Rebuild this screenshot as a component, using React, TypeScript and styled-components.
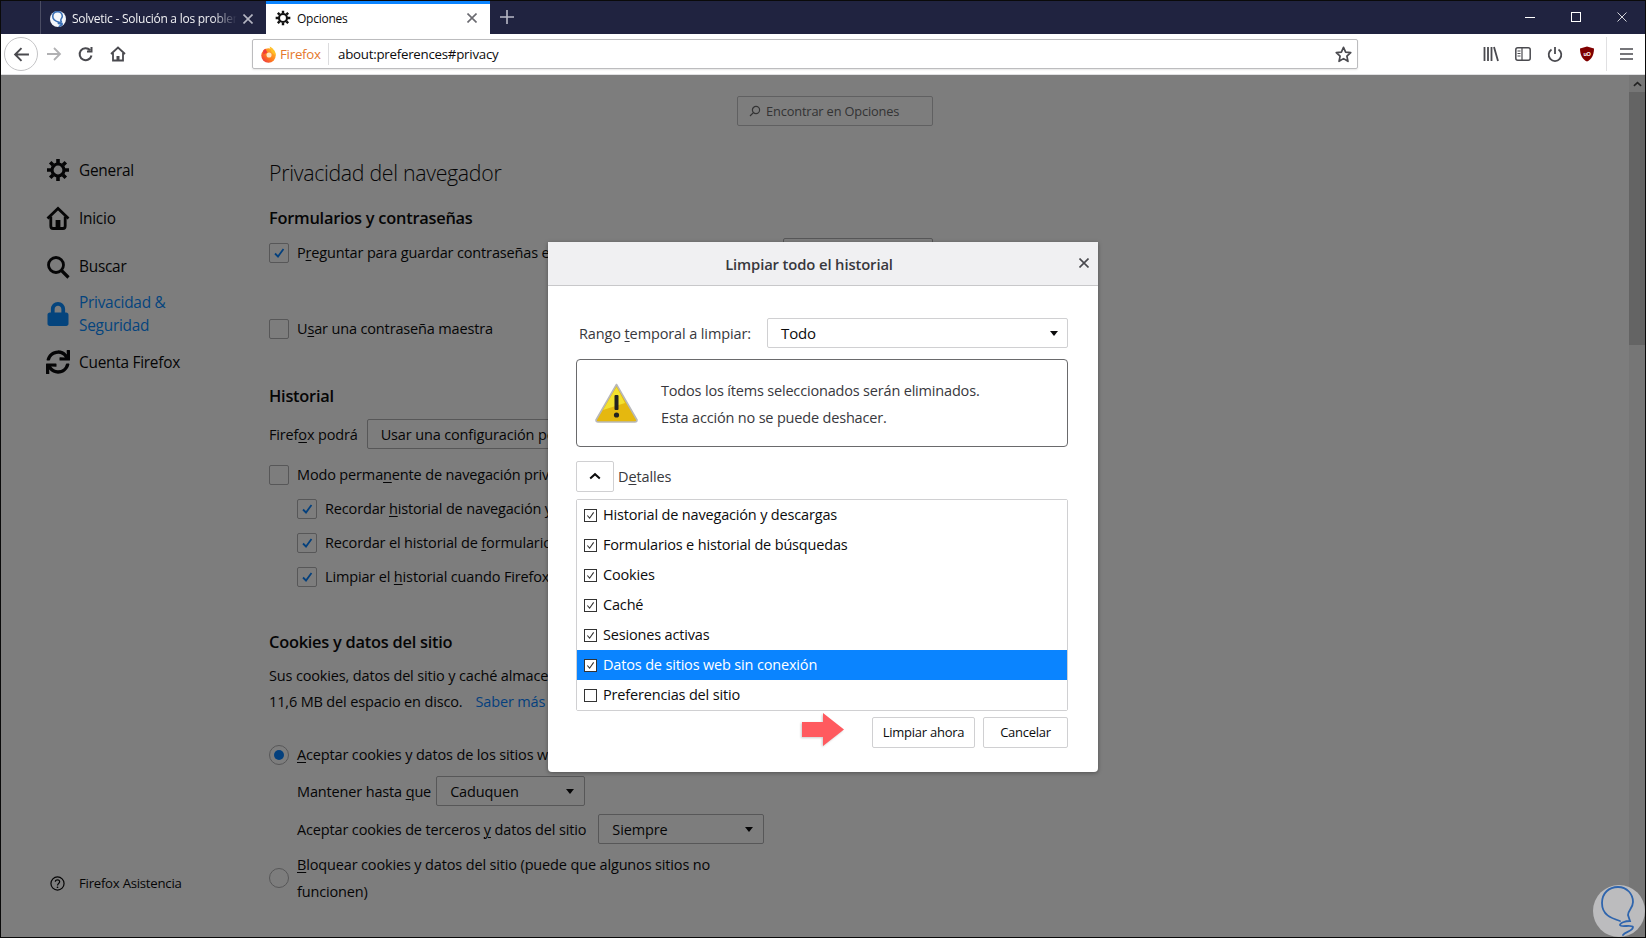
import React from "react";
import styled, { createGlobalStyle } from "styled-components";
import { FaLock, FaSync } from "react-icons/fa";

const Global = createGlobalStyle`
  html, body { margin: 0; padding: 0; width: 1646px; height: 938px; overflow: hidden; background: #000; }
  * { box-sizing: border-box; }
  u { text-underline-offset: 2px; text-decoration-thickness: 1px; }
`;

const FONT = `"Open Sans", "Noto Sans", "Liberation Sans", sans-serif`;

const Win = styled.div`
  position: relative; width: 1646px; height: 938px; border: 1px solid #0a0a0a; display: flex; flex-direction: column;
  overflow: hidden; font-family: ${FONT}; color: #0c0c0d; background: #fff; letter-spacing: -0.25px;
`;
const TabBar = styled.div`height: 33px; background: #202340; display: flex; flex: none;`;
const TabSpacer = styled.div`width: 39px; flex: none;`;
const Tab = styled.div<{ $active?: boolean; $w: number }>`
  width: ${p => p.$w}px; flex: none; height: 33px; display: flex; align-items: center; font-size: 12px;
  padding-top: ${p => (p.$active ? 0 : 2)}px; padding-bottom: ${p => (p.$active ? 2 : 0)}px; overflow: hidden;
  background: ${p => (p.$active ? "#fff" : "transparent")};
  color: ${p => (p.$active ? "#0c0c0d" : "#f1f1f4")};
  border-top: ${p => (p.$active ? "3px solid #0a84ff" : "0")};
  border-left: ${p => (p.$active ? "0" : "1px solid #4a4c63")};
`;
const TabIcon = styled.span`width: 16px; height: 16px; flex: none; display: flex; margin-left: 9px; margin-right: 6px;`;
const TabTitle = styled.span<{ $fade?: boolean }>`
  flex: 1; white-space: nowrap; overflow: hidden;
  ${p => p.$fade && `-webkit-mask-image: linear-gradient(to right, #000 85%, transparent 100%);`}
`;
const TabClose = styled.svg`width: 10px; height: 10px; flex: none; margin: 0 13px 0 6px;`;
const NewTab = styled.svg`width: 14px; height: 14px; margin: 9px 0 0 10px; flex: none;`;
const WinControls = styled.div`margin-left: auto; display: flex; height: 33px; align-items: center; padding-right: 18px; gap: 36px;`;
const WinGlyph = styled.svg`width: 10px; height: 10px; display: block; margin-top: -1px;`;

const NavBar = styled.div`
  height: 41px; flex: none; background: #fff; border-bottom: 1px solid #e0e0e2; display: flex; align-items: center;
`;
const BackCircle = styled.div`
  width: 34px; height: 34px; border-radius: 50%; border: 1px solid #c4c4c6; margin-left: 3px; display: flex; align-items: center; justify-content: center; flex: none;
`;
const NavBtn = styled.svg<{ $ml: number }>`width: 16px; height: 16px; margin-left: ${p => p.$ml}px; flex: none;`;
const UrlBar = styled.div`
  width: 1106px; height: 30px; margin-left: 126px; flex: none; border: 1px solid #bcbcbe; border-radius: 2px; display: flex; align-items: center;
  box-shadow: 0 1px 2px rgba(0,0,0,.1); font-size: 13.3px;
`;
const FoxIcon = styled.svg`width: 17px; height: 17px; margin-left: 7px; flex: none;`;
const FoxLabel = styled.span`color: #e5782b; margin-left: 3px; width: 48px; flex: none;`;
const UrlSep = styled.span`width: 1px; height: 22px; background: #dcdcde; flex: none;`;
const UrlText = styled.span`margin-left: 9px; flex: 1; color: #0c0c0d;`;
const Star = styled.svg`width: 17px; height: 17px; margin-right: 5px; flex: none;`;
const NavRight = styled.div`margin-left: auto; display: flex; align-items: center; height: 100%; padding-right: 12px;`;
const ToolIcon = styled.svg<{ $ml?: number; $w?: number }>`width: ${p => p.$w ?? 16}px; height: 16px; margin-left: ${p => p.$ml ?? 16}px; flex: none;`;
const ToolSep = styled.span`width: 1px; height: 34px; background: #e0e0e2; margin: 0 13px 0 11px; flex: none;`;

const Content = styled.div`flex: 1; display: flex; position: relative; overflow: hidden; background: #fff; min-height: 0;`;
const Sidebar = styled.nav`
  width: 268px; flex: none; display: flex; flex-direction: column; justify-content: space-between; padding: 71px 0 45px 45px; font-size: 15.4px;
`;
const SideList = styled.div`display: flex; flex-direction: column;`;
const SideItem = styled.div<{ $active?: boolean; $h?: number }>`
  display: flex; align-items: center; gap: 9px; height: ${p => p.$h ?? 48}px; line-height: 23px;
  color: ${p => (p.$active ? "#0a8cff" : "#0c0c0d")};
  svg { width: 24px; height: 24px; flex: none; color: ${p => (p.$active ? "#0a8cff" : "#0c0c0d")}; }
`;
const Support = styled.div`display: flex; align-items: center; gap: 14px; font-size: 13.2px; padding-left: 4px; height: 18px;`;
const Main = styled.main`flex: 1; display: flex; flex-direction: column; padding-top: 21px; font-size: 14.5px; letter-spacing: -0.15px; min-width: 0;`;
const SearchWrap = styled.div`padding-left: 468px; flex: none;`;
const SearchBox = styled.div`
  width: 196px; height: 30px; border: 1px solid #c4c4c6; border-radius: 2px; display: flex; align-items: center; gap: 5px; padding-left: 11px; font-size: 12.8px; color: #6a6a6c;
  svg { width: 12px; height: 12px; }
`;
const Title = styled.h1`font-size: 21.3px; font-weight: 300; line-height: 30px; margin: 32px 0 0; letter-spacing: -0.3px; flex: none;`;
const Heading = styled.h2<{ $mt: number }>`font-size: 16.4px; font-weight: 600; line-height: 22px; margin: ${p => p.$mt}px 0 0; letter-spacing: -0.25px; flex: none;`;
const Row = styled.div<{ $mt: number; $indent?: boolean }>`
  display: flex; align-items: center; gap: 8px; height: 20px; margin-top: ${p => p.$mt}px; padding-left: ${p => (p.$indent ? 28 : 0)}px; flex: none; white-space: nowrap;
`;
const RowText = styled.span<{ $w?: number }>`
  line-height: 19px; padding-bottom: 1px; ${p => p.$w && `width: ${p.$w}px; overflow: hidden; flex: none;`}
`;
const Box = styled.span`
  width: 20px; height: 20px; border: 1px solid #b1b1b3; border-radius: 2px; flex: none; background: #fff; display: flex; align-items: center; justify-content: center;
  svg { width: 12px; height: 12px; }
`;
const PageButton = styled.span`
  width: 150px; height: 30px; margin: -5px 0; border: 1px solid #b1b1b3; border-radius: 2px; background: #fff; flex: none; display: flex; align-items: center; justify-content: center;
`;
const Radio = styled.span<{ $on?: boolean }>`
  width: 20px; height: 20px; border-radius: 50%; border: 1px solid #b1b1b3; flex: none; background: #fff; display: flex; align-items: center; justify-content: center;
  &::after { content: ""; width: 10px; height: 10px; border-radius: 50%; background: ${p => (p.$on ? "#0a84ff" : "transparent")}; }
`;
const FieldRow = styled.div<{ $mt: number; $indent?: boolean; $gap?: number }>`
  display: flex; align-items: center; gap: ${p => p.$gap ?? 8}px; height: 30px; margin-top: ${p => p.$mt}px; padding-left: ${p => (p.$indent ? 28 : 0)}px; flex: none; white-space: nowrap;
`;
const PageSelect = styled.div<{ $w: number }>`
  width: ${p => p.$w}px; height: 30px; border: 1px solid #b1b1b3; border-radius: 2px; display: flex; align-items: center; justify-content: space-between; padding: 0 10px 0 13px; background: #fff; flex: none; white-space: nowrap;
`;
const Caret = styled.span`width: 0; height: 0; border-left: 4px solid transparent; border-right: 4px solid transparent; border-top: 5px solid #0c0c0d; flex: none;`;
const Para = styled.p`margin: 10px 0 0; line-height: 26px; flex: none; white-space: nowrap;`;
const LinkText = styled.span`color: #0a84ff; margin-left: 13px;`;
const TwoLine = styled.div`display: flex; align-items: center; gap: 8px; margin-top: 7px; line-height: 27px; flex: none; max-width: 470px;`;
const Scroll = styled.div`width: 16px; flex: none; background: #f0f0f0; display: flex; flex-direction: column;`;
const ScrollUp = styled.div`height: 17px; display: flex; align-items: center; justify-content: center; flex: none;`;
const ScrollThumb = styled.div`height: 253px; background: #cdcdcd; flex: none;`;

const Scrim = styled.div`position: absolute; inset: 0; background: rgba(0, 0, 0, 0.51);`;
const Dialog = styled.div`
  position: absolute; left: 547px; top: 167px; width: 550px; height: 530px; background: #fff; border-radius: 0 0 4px 4px; box-shadow: 0 1px 4px rgba(0,0,0,.35);
  display: flex; flex-direction: column; font-size: 14.5px; letter-spacing: -0.12px; color: #0c0c0d;
`;
const DlgHeader = styled.div`
  height: 44px; flex: none; background: #f0f0f2; border-bottom: 1px solid #c8c8ca; display: flex; align-items: center; justify-content: center; padding-right: 28px; font-weight: 600; font-size: 14.8px; color: #38383d; position: relative; padding-top: 1px;
`;
const DlgClose = styled.svg`position: absolute; right: 9px; top: 16px; width: 10px; height: 10px;`;
const DlgBody = styled.div`padding: 0 30px 0 28px; display: flex; flex-direction: column; flex: 1;`;
const RangeRow = styled.div`display: flex; align-items: center; justify-content: space-between; margin-top: 32px; height: 30px; padding-left: 3px; flex: none; color: #38383d;`;
const DlgSelect = styled.div`
  width: 301px; height: 30px; border: 1px solid #d0d0d2; border-radius: 2px; display: flex; align-items: center; justify-content: space-between; padding: 0 9px 0 13px; color: #0c0c0d; font-size: 15px;
`;
const Warning = styled.div`
  margin-top: 11px; height: 88px; border: 1px solid #6a6a6c; border-radius: 4px; display: flex; align-items: center; padding-left: 18px; gap: 23px; line-height: 27px; color: #38383d; flex: none; letter-spacing: -0.18px;
`;
const WarnText = styled.div`padding-top: 2px;`;
const WarnIcon = styled.svg`width: 43px; height: 40px; flex: none;`;
const DetailsRow = styled.div`margin-top: 14px; height: 30px; display: flex; align-items: center; gap: 4px; color: #38383d; flex: none;`;
const ChevronBtn = styled.div`width: 38px; height: 31px; border: 1px solid #d0d0d2; border-radius: 2px; display: flex; align-items: center; justify-content: center;`;
const List = styled.div`margin-top: 8px; height: 212px; border: 1px solid #d0d0d2; border-radius: 2px; flex: none; display: flex; flex-direction: column;`;
const ListRow = styled.div<{ $sel?: boolean }>`
  height: 30px; flex: none; display: flex; align-items: center; gap: 6px; padding-left: 7px; letter-spacing: -0.17px;
  background: ${p => (p.$sel ? "#0a84ff" : "#fff")}; color: ${p => (p.$sel ? "#fff" : "#0c0c0d")};
`;
const ListLabel = styled.span`padding-bottom: 2px;`;
const MiniBox = styled.span`
  width: 13px; height: 13px; flex: none; border: 1px solid #333; background: #fff; display: flex; align-items: center; justify-content: center;
  svg { width: 9px; height: 9px; }
`;
const Footer = styled.div`display: flex; align-items: flex-start; justify-content: flex-end; gap: 8px; margin-top: 2px; flex: none;`;
const Arrow = styled.svg`width: 46px; height: 34px; flex: none; margin-right: 17px; filter: drop-shadow(-1px 1px 1px rgba(0,0,0,.2));`;
const DlgButton = styled.div<{ $w: number }>`
  width: ${p => p.$w}px; height: 31px; margin-top: 4px; padding-bottom: 2px; border: 1px solid #d0d0d2; border-radius: 2px; display: flex; align-items: center; justify-content: center; font-size: 13px; background: #fff; color: #0c0c0d; letter-spacing: -0.25px;
`;
const Watermark = styled.svg`position: absolute; right: 0; bottom: 0; width: 52px; height: 52px;`;

const X = ({ c = "#6a6a70", w = 1.6 }: { c?: string; w?: number }) => (
  <path d="M0.5 0.5 L9.5 9.5 M9.5 0.5 L0.5 9.5" stroke={c} strokeWidth={w} fill="none" />
);
const Check = ({ c = "#0a84ff" }: { c?: string }) => (
  <svg viewBox="0 0 12 12"><path d="M2 6.5 L5 9.5 L10.5 2" stroke={c} strokeWidth="1.8" fill="none" /></svg>
);
const MiniCheck = () => (
  <svg viewBox="0 0 10 10"><path d="M1.5 5 L4 8 L8.5 1.5" stroke="#333" strokeWidth="1.2" fill="none" /></svg>
);
const Bulb = ({ c, w }: { c: string; w: number }) => (
  <path d="M27 36 C18 33 9 30 9 18 C9 8 16 2 25 2 C34 2 40 9 40 17 C40 23 35 25 35 30 L37 36 C32 36 27 38 27 40 C28 43 38 39 40 42 C40 46 32 47 30 50" stroke={c} strokeWidth={w} fill="none" strokeLinecap="round" />
);
const Gear = ({ size = 24, c = "#0c0c0d" }: { size?: number; c?: string }) => (
  <svg viewBox="0 0 24 24" width={size} height={size}>
    <circle cx="12" cy="12" r="6" stroke={c} strokeWidth="3.2" fill="none" />
    <path d="M12 1 V5 M12 19 V23 M1 12 H5 M19 12 H23 M4.2 4.2 L7 7 M17 17 L19.8 19.8 M4.2 19.8 L7 17 M17 7 L19.8 4.2" stroke={c} strokeWidth="3.6" />
  </svg>
);
const HomeIcon = () => (
  <svg viewBox="0 0 24 24">
    <path d="M1.5 12.5 L12 2.5 L22.5 12.5" stroke="currentColor" strokeWidth="2.8" fill="none" />
    <path d="M4.8 10.5 V20 Q4.8 22.5 7 22.5 H17 Q19.2 22.5 19.2 20 V10.5" stroke="currentColor" strokeWidth="2.8" fill="none" />
    <rect x="9.6" y="14" width="4.8" height="8" fill="currentColor" />
  </svg>
);
const SearchIcon = () => (
  <svg viewBox="0 0 24 24">
    <circle cx="10" cy="10" r="7.5" stroke="currentColor" strokeWidth="2.8" fill="none" />
    <path d="M15.5 15.5 L22.5 22.5" stroke="currentColor" strokeWidth="3.2" />
  </svg>
);

const rows: [string, boolean, boolean][] = [
  ["Historial de navegación y descargas", true, false],
  ["Formularios e historial de búsquedas", true, false],
  ["Cookies", true, false],
  ["Caché", true, false],
  ["Sesiones activas", true, false],
  ["Datos de sitios web sin conexión", true, true],
  ["Preferencias del sitio", false, false],
];

export default function App() {
  return (
    <Win>
      <Global />
      <TabBar>
        <TabSpacer />
        <Tab $w={226}>
          <TabIcon>
            <svg viewBox="0 0 52 52" width="16" height="16">
              <circle cx="26" cy="26" r="26" fill="#f4f6fa" />
              <Bulb c="#3a6fb5" w={5} />
            </svg>
          </TabIcon>
          <TabTitle $fade>Solvetic - Solución a los problemas</TabTitle>
          <TabClose viewBox="0 0 10 10"><X c="#b4b5c2" /></TabClose>
        </Tab>
        <Tab $w={224} $active>
          <TabIcon><Gear size={16} c="#111" /></TabIcon>
          <TabTitle>Opciones</TabTitle>
          <TabClose viewBox="0 0 10 10"><X /></TabClose>
        </Tab>
        <NewTab viewBox="0 0 14 14"><path d="M7 0 V14 M0 7 H14" stroke="#b8b9c6" strokeWidth="1.6" /></NewTab>
        <WinControls>
          <WinGlyph viewBox="0 0 10 10"><path d="M0 5.5 H10" stroke="#fff" /></WinGlyph>
          <WinGlyph viewBox="0 0 10 10"><rect x="0.5" y="0.5" width="9" height="9" stroke="#fff" fill="none" /></WinGlyph>
          <WinGlyph viewBox="0 0 10 10"><X c="#fff" w={0.8} /></WinGlyph>
        </WinControls>
      </TabBar>
      <NavBar>
        <BackCircle>
          <svg viewBox="0 0 16 16" width="17" height="17"><path d="M15 8 H2 M8 2 L2 8 L8 14" stroke="#4a4a4f" strokeWidth="1.8" fill="none" /></svg>
        </BackCircle>
        <NavBtn $ml={8} viewBox="0 0 16 16"><path d="M1 8 H14 M8 2 L14 8 L8 14" stroke="#b1b1b3" strokeWidth="1.8" fill="none" /></NavBtn>
        <NavBtn $ml={16} viewBox="0 0 16 16"><path d="M13.5 9.5 A6 6 0 1 1 12 4 M13.5 1 V5.5 H9" stroke="#4a4a4f" strokeWidth="2" fill="none" /></NavBtn>
        <NavBtn $ml={16} viewBox="0 0 16 16"><path d="M1 8 L8 1.5 L15 8 M3 7 V14.5 H13 V7" stroke="#4a4a4f" strokeWidth="1.8" fill="none" /><rect x="6.5" y="10" width="3" height="4.5" fill="#4a4a4f" /></NavBtn>
        <UrlBar>
          <FoxIcon viewBox="0 0 16 16">
            <defs>
              <linearGradient id="fx" x1="1" y1="0" x2="0" y2="1"><stop offset="0" stopColor="#ffcb2e" /><stop offset="0.55" stopColor="#ff7a1e" /><stop offset="1" stopColor="#e8264b" /></linearGradient>
            </defs>
            <circle cx="8" cy="9" r="6.8" fill="url(#fx)" />
            <circle cx="8.5" cy="8.5" r="2.4" fill="#fde7c8" />
            <path d="M9 0.5 C13 2.5 15 6 14.8 9 L11 6 Z" fill="#ffc128" />
            <path d="M3 5 C3 3.5 4 3 5 2.5 L7 6 L3 8 Z" fill="#ef3c3c" />
          </FoxIcon>
          <FoxLabel>Firefox</FoxLabel>
          <UrlSep />
          <UrlText>about:preferences#privacy</UrlText>
          <Star viewBox="0 0 16 16"><path d="M8 1.3 L10 5.8 L14.8 6.3 L11.2 9.6 L12.2 14.4 L8 11.9 L3.8 14.4 L4.8 9.6 L1.2 6.3 L6 5.8 Z" fill="none" stroke="#4a4a4f" strokeWidth="1.6" strokeLinejoin="round" /></Star>
        </UrlBar>
        <NavRight>
          <ToolIcon viewBox="0 0 16 16"><path d="M1.5 1 V15 M5 1 V15 M8.5 1 V15 M11 1 L15 15" stroke="#4a4a4f" strokeWidth="1.8" fill="none" /></ToolIcon>
          <ToolIcon viewBox="0 0 16 16"><rect x="0.8" y="1.8" width="14.4" height="12.4" rx="2" fill="none" stroke="#4a4a4f" strokeWidth="1.5" /><path d="M7 2 V14 M2.5 5 H5.5 M2.5 7.5 H5.5 M2.5 10 H5.5" stroke="#4a4a4f" strokeWidth="1.2" /></ToolIcon>
          <ToolIcon viewBox="0 0 16 16"><path d="M8 1 V8 M4.5 3.5 A6.3 6.3 0 1 0 11.5 3.5" stroke="#4a4a4f" strokeWidth="1.8" fill="none" /></ToolIcon>
          <ToolIcon viewBox="0 0 16 16">
            <path d="M8 0.5 L15 2.5 C15 9 12.5 13.5 8 15.5 C3.5 13.5 1 9 1 2.5 Z" fill="#800000" />
            <text x="8" y="9.6" fontSize="5.5" fontWeight="700" textAnchor="middle" fill="#fff" fontFamily="Liberation Sans, sans-serif">uO</text>
          </ToolIcon>
          <ToolSep />
          <ToolIcon $ml={0} $w={13} viewBox="0 0 13 16"><path d="M0 3 H13 M0 8 H13 M0 13 H13" stroke="#4a4a4f" strokeWidth="1.7" /></ToolIcon>
        </NavRight>
      </NavBar>
      <Content>
        <Sidebar>
          <SideList>
            <SideItem><Gear />General</SideItem>
            <SideItem><HomeIcon />Inicio</SideItem>
            <SideItem $h={49}><SearchIcon />Buscar</SideItem>
            <SideItem $active $h={46}><FaLock />Privacidad &amp;<br />Seguridad</SideItem>
            <SideItem $h={50}><FaSync />Cuenta Firefox</SideItem>
          </SideList>
          <Support>
            <svg viewBox="0 0 16 16" width="15" height="15"><circle cx="8" cy="8" r="7" stroke="#0c0c0d" strokeWidth="1.3" fill="none" /><path d="M5.7 6.2 C5.7 3.4 10.3 3.4 10.3 6.2 C10.3 8 8 8 8 10" stroke="#0c0c0d" strokeWidth="1.3" fill="none" /><circle cx="8" cy="12" r="0.9" fill="#0c0c0d" /></svg>
            Firefox Asistencia
          </Support>
        </Sidebar>
        <Main>
          <SearchWrap>
            <SearchBox>
              <svg viewBox="0 0 12 12"><circle cx="7" cy="5" r="3.6" stroke="#6a6a6c" strokeWidth="1.2" fill="none" /><path d="M4.4 7.6 L1 11" stroke="#6a6a6c" strokeWidth="1.2" /></svg>
              Encontrar en Opciones
            </SearchBox>
          </SearchWrap>
          <Title>Privacidad del navegador</Title>
          <Heading $mt={19}>Formularios y contraseñas</Heading>
          <Row $mt={14}>
            <Box><Check /></Box>
            <RowText $w={478}>P<u>r</u>eguntar para guardar contraseñas e inicios de sesión de sitios web</RowText>
            <PageButton>Excepciones…</PageButton>
          </Row>
          <Row $mt={56}><Box /><RowText>U<u>s</u>ar una contraseña maestra</RowText></Row>
          <Heading $mt={46}>Historial</Heading>
          <FieldRow $mt={12} $gap={9}><span>Firef<u>o</u>x podrá</span><PageSelect $w={400}>Usar una configuración personalizada para el historial</PageSelect></FieldRow>
          <Row $mt={16}><Box /><RowText>Modo perma<u>n</u>ente de navegación privada</RowText></Row>
          <Row $mt={14} $indent><Box><Check /></Box><RowText>Recordar <u>h</u>istorial de navegación y descargas</RowText></Row>
          <Row $mt={14} $indent><Box><Check /></Box><RowText>Recordar el historial de <u>f</u>ormularios y búsquedas</RowText></Row>
          <Row $mt={14} $indent><Box><Check /></Box><RowText>Limpiar el <u>h</u>istorial cuando Firefox se cierre</RowText></Row>
          <Heading $mt={44}>Cookies y datos del sitio</Heading>
          <Para>Sus cookies, datos del sitio y caché almacenados están usando actualmente<br />11,6 MB del espacio en disco.<LinkText>Saber más</LinkText></Para>
          <Row $mt={30}><Radio $on /><RowText><u>A</u>ceptar cookies y datos de los sitios web</RowText></Row>
          <FieldRow $mt={11} $indent $gap={5}><span>Mantener hasta <u>q</u>ue</span><PageSelect $w={149}>Caduquen<Caret /></PageSelect></FieldRow>
          <FieldRow $mt={8} $indent $gap={12}><span>Aceptar cookies de terceros <u>y</u> datos del sitio</span><PageSelect $w={166}>Siempre<Caret /></PageSelect></FieldRow>
          <TwoLine><Radio /><span><u>B</u>loquear cookies y datos del sitio (puede que algunos sitios no funcionen)</span></TwoLine>
        </Main>
        <Scroll>
          <ScrollUp><svg viewBox="0 0 10 6" width="9" height="6"><path d="M1 5 L5 1.5 L9 5" stroke="#444" strokeWidth="1.8" fill="none" /></svg></ScrollUp>
          <ScrollThumb />
        </Scroll>
        <Scrim />
        <Dialog>
          <DlgHeader>
            Limpiar todo el historial
            <DlgClose viewBox="0 0 10 10"><X c="#4a4a4f" /></DlgClose>
          </DlgHeader>
          <DlgBody>
            <RangeRow>
              <span>Rango <u>t</u>emporal a limpiar:</span>
              <DlgSelect>Todo<Caret /></DlgSelect>
            </RangeRow>
            <Warning>
              <WarnIcon viewBox="0 0 43 40">
                <path d="M21.5 1.5 L42 37 Q42 39 40 39 L3 39 Q1 39 1 37 Z" fill="#e5b80f" stroke="#b8b8b8" strokeWidth="1.6" strokeLinejoin="round" />
                <path d="M21.5 4 L8 27 L30 20 Z" fill="#f3e12e" />
                <rect x="19.5" y="12" width="4" height="15" rx="1" fill="#222" />
                <circle cx="21.5" cy="32" r="2.6" fill="#222" />
              </WarnIcon>
              <WarnText>Todos los ítems seleccionados serán eliminados.<br />Esta acción no se puede deshacer.</WarnText>
            </Warning>
            <DetailsRow>
              <ChevronBtn><svg viewBox="0 0 10 6" width="12" height="8"><path d="M1 5 L5 1.5 L9 5" stroke="#0c0c0d" strokeWidth="1.7" fill="none" /></svg></ChevronBtn>
              <span>D<u>e</u>talles</span>
            </DetailsRow>
            <List>
              {rows.map(([label, on, sel]) => (
                <ListRow key={label} $sel={sel}>
                  <MiniBox>{on && <MiniCheck />}</MiniBox>
                  <ListLabel>{label}</ListLabel>
                </ListRow>
              ))}
            </List>
            <Footer>
              <Arrow viewBox="0 0 46 34">
                <path d="M1 9 H22 V0 L43 16.5 L22 33 V24 H1 Z" fill="#ff5a5f" />
              </Arrow>
              <DlgButton $w={103}>Limpiar ahora</DlgButton>
              <DlgButton $w={85}>Cancelar</DlgButton>
            </Footer>
          </DlgBody>
        </Dialog>
      </Content>
      <Watermark viewBox="0 0 52 52">
        <circle cx="26" cy="26" r="26" fill="#bcbcbe" />
        <Bulb c="#2f65ad" w={1.8} />
      </Watermark>
    </Win>
  );
}
